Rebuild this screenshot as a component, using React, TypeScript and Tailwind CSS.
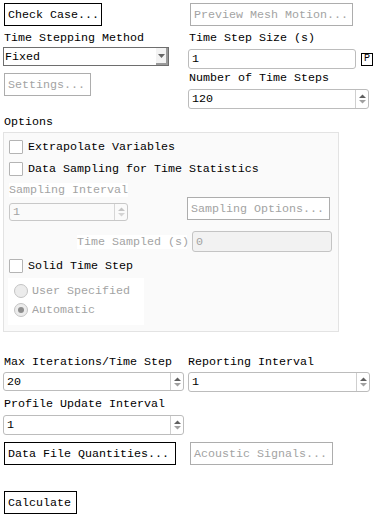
import type { ReactNode } from "react";

const FONT = "font-['Liberation_Mono',monospace] text-[11.67px] leading-[14px]";

function Btn({ children, disabled, className = "" }: { children: ReactNode; disabled?: boolean; className?: string }) {
  return (
    <div
      className={`flex h-[23px] items-center border bg-white px-[3px] ${
        disabled ? "border-[#adadad] text-[#a3a3a3]" : "border-black text-black"
      } ${className}`}
    >
      {children}
    </div>
  );
}

function SpinArrows({ disabled }: { disabled?: boolean }) {
  return (
    <svg width="9" height="12" viewBox="0 0 9 12">
      <path d="M1 5 L4.5 1.5 L8 5 Z" fill={disabled ? "#c4c4c4" : "#606060"} />
      <path d="M1 7 L4.5 10.5 L8 7 Z" fill={disabled ? "#d4d4d4" : "#a0a0a0"} />
    </svg>
  );
}

function Spinner({ value, className = "", disabled }: { value: string; className?: string; disabled?: boolean }) {
  return (
    <div
      className={`flex items-stretch rounded-[3px] border ${
        disabled ? "border-[#c8c8c8] bg-[#fafafa] text-[#a3a3a3]" : "border-[#bcbcbc] bg-white text-black"
      } ${className}`}
    >
      <div className="flex flex-1 items-center pl-[3px]">{value}</div>
      <div className={`flex w-[13px] items-center justify-center border-l ${disabled ? "border-[#d6d6d6]" : "border-[#cfcfcf]"}`}>
        <SpinArrows disabled={disabled} />
      </div>
    </div>
  );
}

function Check({ label }: { label: string }) {
  return (
    <div className="flex items-center gap-[5px]">
      <div className="h-[14px] w-[14px] rounded-[1px] border border-[#b4b4b4] bg-white" />
      <span>{label}</span>
    </div>
  );
}

function Radio({ label, on }: { label: string; on?: boolean }) {
  return (
    <div className="flex items-center gap-[4px] text-[#a3a3a3]">
      <div className="flex h-[14px] w-[14px] items-center justify-center rounded-full border border-[#c4c4c4] bg-[#ececec]">
        {on && <div className="h-[6px] w-[6px] rounded-full bg-[#8e8e8e]" />}
      </div>
      <span>{label}</span>
    </div>
  );
}

export default function App() {
  return (
    <div className={`h-[516px] w-[381px] overflow-hidden whitespace-nowrap bg-white pt-[3px] text-black ${FONT}`}>
      {/* top buttons */}
      <div className="flex">
        <Btn className="ml-[4px] w-[98px]">Check Case...</Btn>
        <Btn disabled className="ml-[88px] w-[163px]">Preview Mesh Motion...</Btn>
      </div>

      <div className="mt-[5px] flex">
        <div className="ml-[3px] flex w-[166px] flex-col">
          <div className="pl-[1px]">Time Stepping Method</div>
          <div className="mt-[2px] flex h-[19px] items-stretch border border-[#6e6e6e] bg-white">
            <div className="flex flex-1 items-center pl-[1px]">Fixed</div>
            <div className="flex w-[12px] items-center justify-center border-b-2 border-r-2 border-b-[#9a9a9a] border-r-[#9a9a9a] bg-[#f3f3f3]">
              <svg width="7" height="4" viewBox="0 0 7 4">
                <path d="M0 0 L7 0 L3.5 4 Z" fill="#666" />
              </svg>
            </div>
          </div>
          <Btn disabled className="ml-[1px] mt-[7px] w-[87px]">Settings...</Btn>
        </div>

        <div className="ml-[19px] flex flex-col">
          <div className="pl-[1px]">Time Step Size (s)</div>
          <div className="mt-[4px] flex items-center">
            <div className="flex h-[20px] w-[168px] items-center rounded-[3px] border border-[#bcbcbc] pl-[3px]">1</div>
            <div className="ml-[5px] flex h-[13px] w-[12px] items-center justify-center border border-black text-[10px] leading-none">
              P
            </div>
          </div>
          <div className="mt-[2px] pl-[1px]">Number of Time Steps</div>
          <Spinner value="120" className="mt-[4px] h-[20px] w-[181px]" />
        </div>
      </div>

      <div className="ml-[4px] mt-[6px]">Options</div>

      {/* options group */}
      <div className="ml-[3px] mt-[3px] flex h-[200px] w-[336px] flex-col border border-[#e3e3e3] bg-[#fafafa] pl-[5px] pt-[7px]">
        <Check label="Extrapolate Variables" />
        <div className="mt-[8px]">
          <Check label="Data Sampling for Time Statistics" />
        </div>
        <div className="mt-[7px] flex">
          <div className="flex w-[119px] flex-col">
            <div className="bg-white text-[#a3a3a3]">Sampling Interval</div>
            <Spinner disabled value="1" className="mt-[6px] h-[18px] w-[119px]" />
          </div>
          <Btn disabled className="ml-[59px] mt-[14px] h-[22px] w-[143px]">Sampling Options...</Btn>
        </div>
        <div className="mt-[10px] flex items-center">
          <div className="ml-[68px] w-[110px] bg-white text-[#a3a3a3]">Time Sampled (s)</div>
          <div className="ml-[5px] flex h-[21px] w-[140px] items-center rounded-[3px] border border-[#c4c4c4] bg-[#f2f2f2] pl-[3px] text-[#a3a3a3]">
            0
          </div>
        </div>
        <div className="mt-[7px]">
          <Check label="Solid Time Step" />
        </div>
        <div className="-ml-[1px] mt-[5px] flex h-[47px] w-[136px] flex-col gap-[5px] bg-white pl-[6px] pt-[6px]">
          <Radio label="User Specified" />
          <Radio label="Automatic" on />
        </div>
      </div>

      {/* iterations */}
      <div className="mt-[23px] flex">
        <div className="ml-[3px] flex w-[181px] flex-col">
          <div className="pl-[1px]">Max Iterations/Time Step</div>
          <Spinner value="20" className="mt-[3px] h-[19px] w-[181px]" />
        </div>
        <div className="ml-[4px] flex flex-col">
          <div>Reporting Interval</div>
          <Spinner value="1" className="mt-[3px] h-[20px] w-[182px]" />
        </div>
      </div>

      <div className="ml-[4px] mt-[5px]">Profile Update Interval</div>
      <Spinner value="1" className="ml-[3px] mt-[4px] h-[20px] w-[181px]" />

      <div className="mt-[7px] flex">
        <Btn className="ml-[4px] w-[172px]">Data File Quantities...</Btn>
        <Btn disabled className="ml-[14px] w-[143px]">Acoustic Signals...</Btn>
      </div>

      <Btn className="ml-[4px] mt-[26px] w-[73px]">Calculate</Btn>
    </div>
  );
}
